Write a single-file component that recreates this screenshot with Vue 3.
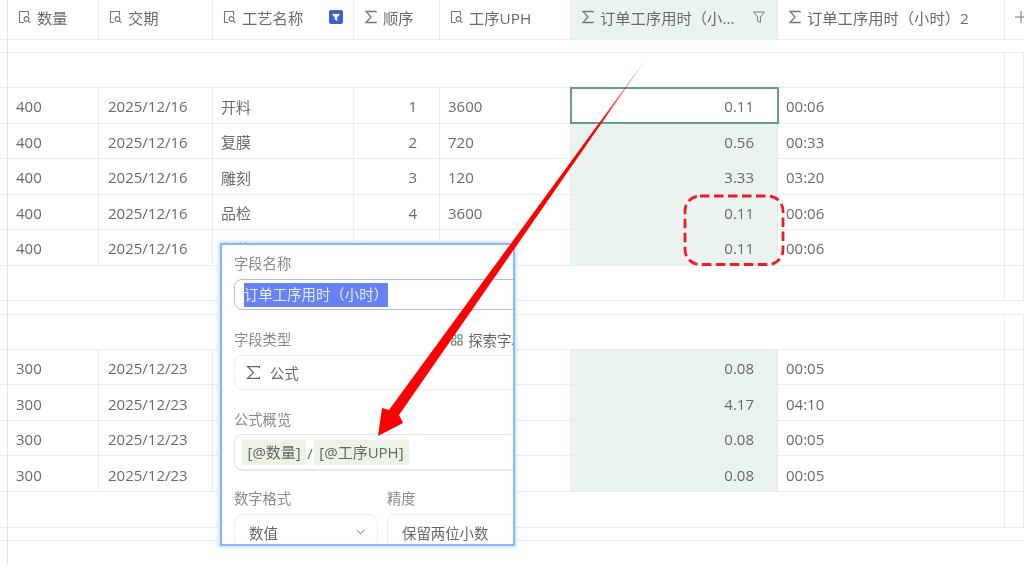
<script setup>
const columns = [
  { name: '数量', icon: 'doc' },
  { name: '交期', icon: 'doc' },
  { name: '工艺名称', icon: 'doc', badge: true },
  { name: '顺序', icon: 'sum' },
  { name: '工序UPH', icon: 'doc' },
  { name: '订单工序用时（小...', icon: 'sum', filter: true, active: true },
  { name: '订单工序用时（小时）2', icon: 'sum' }
]

const groups = [
  {
    qty: 400,
    date: '2025/12/16',
    rows: [
      ['开料', 1, 3600, '0.11', '00:06'],
      ['复膜', 2, 720, '0.56', '00:33'],
      ['雕刻', 3, 120, '3.33', '03:20'],
      ['品检', 4, 3600, '0.11', '00:06'],
      ['包装', 5, 3600, '0.11', '00:06']
    ]
  },
  {
    qty: 300,
    date: '2025/12/23',
    rows: [
      ['开料', 1, 3600, '0.08', '00:05'],
      ['雕刻', 2, 72, '4.17', '04:10'],
      ['品检', 3, 3600, '0.08', '00:05'],
      ['包装', 4, 3600, '0.08', '00:05']
    ]
  }
]
</script>

<template>
  <div class="page">
    <div class="row head">
      <div class="cell gutter"></div>
      <div v-for="col in columns" :key="col.name" class="cell" :class="{ green: col.active }">
        <svg v-if="col.icon === 'doc'" class="col-icon" viewBox="0 0 14 14" fill="none" stroke="#777" stroke-width="1.1">
          <path d="M5.5 12.5H1.5V1.5H10.5V5.5" />
          <circle cx="8.5" cy="9" r="2.4" />
          <path d="M10.3 10.8L12.5 12.8" />
        </svg>
        <svg v-else class="col-icon" viewBox="0 0 14 14" fill="none" stroke="#777" stroke-width="1.3">
          <path d="M12 2.5V1.5H2L7 7L2 12.5H12V11.5" />
        </svg>
        <span class="col-name">{{ col.name }}</span>
        <svg v-if="col.badge" class="badge" viewBox="0 0 14 14">
          <rect width="14" height="14" rx="2" fill="#3f62c4" />
          <path d="M3 4H11L8.2 7.6V11L5.8 9.8V7.6Z" fill="#fff" />
        </svg>
        <svg v-if="col.filter" class="filter" viewBox="0 0 14 14" fill="none" stroke="#777" stroke-width="1">
          <path d="M1.5 2H12.5L8.4 7V12.5L5.6 11V7Z" />
        </svg>
      </div>
      <div class="cell add">
        <svg class="plus" viewBox="0 0 12 12" stroke="#777" stroke-width="1.1">
          <path d="M0 6H12M6 0V12" />
        </svg>
      </div>
    </div>

    <template v-for="(group, g) in groups" :key="group.qty">
      <div class="row band" :class="{ tall: g === 1 }">
        <div class="cell gutter"></div>
        <div class="cell wide-all"></div>
      </div>
      <div class="row blank">
        <div class="cell gutter"></div>
        <div class="cell wide"></div>
        <div class="cell"></div>
      </div>
      <div v-for="(r, i) in group.rows" :key="r[0]" class="row data">
        <div class="cell gutter"></div>
        <div class="cell">{{ group.qty }}</div>
        <div class="cell">{{ group.date }}</div>
        <div class="cell">{{ r[0] }}</div>
        <div class="cell right order">{{ r[1] }}</div>
        <div class="cell">{{ r[2] }}</div>
        <div class="cell right green hours" :class="{ selected: group.qty === 400 && i === 0 }">{{ r[3] }}</div>
        <div class="cell">{{ r[4] }}</div>
        <div class="cell"></div>
      </div>
      <div class="row blank" :class="{ tall: g === 1 }">
        <div class="cell gutter"></div>
        <div class="cell wide"></div>
        <div class="cell"></div>
      </div>
    </template>

    <div class="row band">
      <div class="cell gutter"></div>
      <div class="cell wide-all"></div>
    </div>
    <div class="row rest">
      <div class="cell gutter"></div>
    </div>

    <div class="popup">
      <div class="label first">字段名称</div>
      <div class="box name-box"><span class="picked">订单工序用时（小时）</span></div>

      <div class="label-row">
        <div class="label">字段类型</div>
        <div class="explore">
          <svg class="explore-icon" viewBox="0 0 12 12">
            <rect x="0.8" y="0.8" width="4" height="4" rx="0.8" fill="none" stroke="#4d9c8d" stroke-width="1.2" />
            <rect x="7" y="0.8" width="4" height="4" rx="0.8" fill="none" stroke="#4d9c8d" stroke-width="1.2" />
            <rect x="0.8" y="7" width="4" height="4" rx="0.8" fill="none" stroke="#666" stroke-width="1.2" />
            <rect x="7" y="7" width="4" height="4" rx="0.8" fill="none" stroke="#666" stroke-width="1.2" />
          </svg>
          <span>探索字段</span>
        </div>
      </div>
      <div class="box type-box">
        <svg class="type-icon" viewBox="0 0 14 14" fill="none" stroke="#666" stroke-width="1.2">
          <path d="M12.5 3V1.5H1.5L7 7L1.5 12.5H12.5V11" />
        </svg>
        <span>公式</span>
      </div>

      <div class="label formula-label">公式概览</div>
      <div class="box formula-box">
        <span class="chip">[@数量]</span>
        <span class="slash">/</span>
        <span class="chip">[@工序UPH]</span>
      </div>

      <div class="two-col">
        <div class="field-a">
          <div class="label">数字格式</div>
          <div class="box pick-box">
            <span>数值</span>
            <svg class="chevron" viewBox="0 0 10 6" fill="none" stroke="#666" stroke-width="1.1">
              <path d="M1 1L5 5L9 1" />
            </svg>
          </div>
        </div>
        <div class="field-b">
          <div class="label">精度</div>
          <div class="box pick-box wide-pick"><span>保留两位小数</span></div>
        </div>
      </div>
    </div>

    <svg class="marks" viewBox="0 0 1024 565">
      <defs>
        <linearGradient id="fade" gradientUnits="userSpaceOnUse" x1="651" y1="52" x2="600" y2="125">
          <stop offset="0" stop-color="#ff0000" stop-opacity="0.05" />
          <stop offset="1" stop-color="#ff0000" />
        </linearGradient>
      </defs>
      <polygon points="651,52 399,415 403,423 378,436 382,408 389,410" fill="url(#fade)" />
      <rect x="685" y="196" width="98" height="68.5" rx="15" fill="none" stroke="#f01c22" stroke-width="2.8" stroke-dasharray="9.5 4.5" />
    </svg>
  </div>
</template>

<style scoped>
.page {
  position: relative;
  width: 1024px;
  height: 565px;
  overflow: hidden;
  background: #fff;
  color: #6a6a6a;
  font-family: "Open Sans", "Noto Sans CJK SC", sans-serif;
  font-size: 15px;
  filter: blur(0.35px);
}
.row {
  display: grid;
  grid-template-columns: 8px 91px 114px 141px 86px 131px 207px 227px 19px;
  box-sizing: border-box;
  border-bottom: 1px solid #ececec;
}
.cell {
  box-sizing: border-box;
  display: flex;
  align-items: center;
  min-width: 0;
  padding: 0 9px 0 8px;
  border-right: 1px solid #ececec;
  white-space: nowrap;
}
.gutter {
  padding: 0;
  border-right-color: #e2e2e2;
}
.head {
  height: 40px;
  font-size: 15.3px;
}
.head .cell:not(.gutter) {
  padding: 0 9px 5px 10px;
}
.col-icon {
  flex: none;
  width: 14px;
  height: 14px;
  margin-right: 5px;
}
.col-name {
  flex: 1;
  overflow: hidden;
}
.badge {
  flex: none;
  width: 14px;
  height: 14px;
  margin-right: 1px;
}
.filter {
  flex: none;
  width: 14px;
  height: 14px;
  margin-right: 2px;
}
.head .add {
  border-right: 0;
  padding: 0 0 5px 15px;
}
.plus {
  flex: none;
  width: 12px;
  height: 12px;
}
.band {
  height: 13px;
}
.band.tall {
  height: 14px;
}
.wide-all {
  grid-column: 2 / 10;
  border-right: 0;
}
.blank {
  height: 35px;
}
.blank.tall {
  height: 36px;
}
.wide {
  grid-column: 2 / 9;
}
.data {
  height: 35.55px;
}
.data .cell {
  padding-top: 2px;
}
.data .cell:nth-child(3) {
  padding-left: 9px;
}
.right {
  justify-content: flex-end;
}
.order {
  padding-right: 22px;
}
.hours {
  padding-right: 23px;
}
.green {
  background: #ebf3f0;
  border-right-color: #dfe9e5;
}
.selected {
  background: #fff;
  outline: 2px solid #6b9a8d;
  outline-offset: -1px;
  z-index: 1;
}
.rest {
  height: 40px;
  border-bottom: 0;
}
.rest .gutter {
  height: 40px;
}

.popup {
  position: absolute;
  z-index: 2;
  left: 220px;
  top: 243px;
  width: 295px;
  height: 303px;
  box-sizing: border-box;
  padding: 0 0 0 12px;
  overflow: hidden;
  background: #fff;
  border: 2px solid #8ab6ff;
  box-shadow: 0 0 4px 1px #bcd6ff;
}
.label {
  flex: none;
  color: #8a8a8a;
  font-size: 14.3px;
  line-height: 20px;
  white-space: nowrap;
}
.first {
  margin-top: 9px;
}
.box {
  box-sizing: border-box;
  display: flex;
  align-items: center;
  width: 290px;
  border: 1px solid #eeeeee;
  border-radius: 8px;
  color: #666;
  font-size: 14.4px;
}
.name-box {
  height: 31px;
  margin-top: 5px;
  padding-left: 9px;
  border-color: #aebcf0;
}
.picked {
  display: block;
  background: #6581f5;
  color: #e9edff;
  line-height: 24px;
}
.label-row {
  display: flex;
  align-items: center;
  margin-top: 19px;
}
.explore {
  flex: none;
  display: flex;
  align-items: center;
  margin-left: 160px;
  color: #666;
  font-size: 14.4px;
  white-space: nowrap;
}
.explore-icon {
  flex: none;
  width: 12px;
  height: 12px;
  margin-right: 5px;
}
.type-box {
  height: 35px;
  margin-top: 5px;
  padding-left: 11px;
}
.type-icon {
  flex: none;
  width: 15px;
  height: 15px;
  margin-right: 9px;
}
.formula-label {
  margin-top: 20px;
}
.formula-box {
  height: 37px;
  margin-top: 4px;
  padding: 1px 0 0 7px;
  border-color: #e6e6e6;
  border-bottom-width: 2px;
  font-size: 15px;
  white-space: nowrap;
}
.chip {
  padding: 0 5.5px;
  background: #ebf3e4;
  line-height: 25px;
}
.slash {
  padding: 0 1px;
}
.two-col {
  display: flex;
  margin-top: 18px;
}
.field-a {
  flex: none;
  width: 144px;
  margin-right: 9px;
}
.field-b {
  flex: none;
  width: 200px;
}
.pick-box {
  justify-content: space-between;
  width: 100%;
  height: 36px;
  margin-top: 5px;
  padding: 0 14px;
  white-space: nowrap;
}
.wide-pick {
  justify-content: flex-start;
}
.chevron {
  flex: none;
  width: 9px;
  height: 6px;
  margin-right: -2px;
}
.marks {
  position: absolute;
  z-index: 3;
  left: 0;
  top: 0;
  width: 1024px;
  height: 565px;
  pointer-events: none;
}
</style>
